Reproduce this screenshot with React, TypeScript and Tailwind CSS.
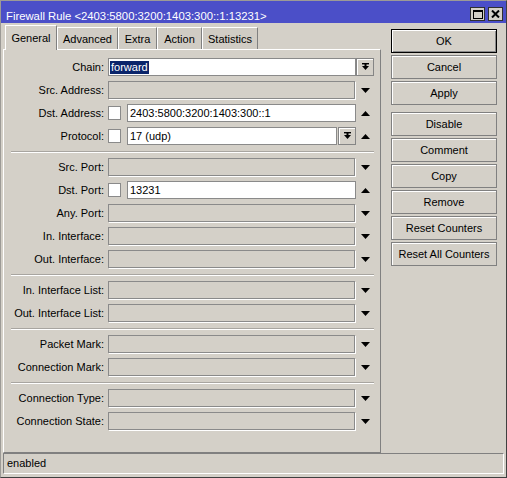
import React from "react";

type Kind = "disabled" | "text" | "check" | "checkDrop";
type Arrow = "down" | "up" | "drop";

type Row = {
  label: string;
  kind: Kind;
  value?: string;
  arrow: Arrow;
  selected?: boolean;
};

const GROUPS: Row[][] = [
  [
    { label: "Chain:", kind: "text", value: "forward", arrow: "drop", selected: true },
    { label: "Src. Address:", kind: "disabled", arrow: "down" },
    { label: "Dst. Address:", kind: "check", value: "2403:5800:3200:1403:300::1", arrow: "up" },
    { label: "Protocol:", kind: "checkDrop", value: "17 (udp)", arrow: "up" },
  ],
  [
    { label: "Src. Port:", kind: "disabled", arrow: "down" },
    { label: "Dst. Port:", kind: "check", value: "13231", arrow: "up" },
    { label: "Any. Port:", kind: "disabled", arrow: "down" },
    { label: "In. Interface:", kind: "disabled", arrow: "down" },
    { label: "Out. Interface:", kind: "disabled", arrow: "down" },
  ],
  [
    { label: "In. Interface List:", kind: "disabled", arrow: "down" },
    { label: "Out. Interface List:", kind: "disabled", arrow: "down" },
  ],
  [
    { label: "Packet Mark:", kind: "disabled", arrow: "down" },
    { label: "Connection Mark:", kind: "disabled", arrow: "down" },
  ],
  [
    { label: "Connection Type:", kind: "disabled", arrow: "down" },
    { label: "Connection State:", kind: "disabled", arrow: "down" },
  ],
];

const TABS = [
  { name: "General", w: "w-[52px]" },
  { name: "Advanced", w: "w-[61px]" },
  { name: "Extra", w: "w-[39px]" },
  { name: "Action", w: "w-[45px]" },
  { name: "Statistics", w: "w-[56px]" },
];

const Tri = ({ dir }: { dir: "up" | "down" }) => (
  <svg width="9" height="5" viewBox="0 0 9 5">
    <polygon points={dir === "down" ? "0,0 9,0 4.5,5" : "0,5 9,5 4.5,0"} fill="#000" />
  </svg>
);

const DropButton = () => (
  <div className="w-[18px] h-[18px] shrink-0 flex items-center justify-center border border-[#858585] shadow-[inset_1px_1px_0_#ffffff] bg-[#d4d0c8]">
    <svg width="7" height="8" viewBox="0 0 7 8">
      <rect x="0" y="0" width="7" height="1.4" fill="#000" />
      <rect x="2.5" y="1" width="2" height="3" fill="#000" />
      <polygon points="0,3 7,3 3.5,7" fill="#000" />
    </svg>
  </div>
);

const Checkbox = () => (
  <div className="w-[13px] h-[14px] shrink-0 bg-white border border-[#8a8a8a]" />
);

const TextBox = ({ value, selected }: { value?: string; selected?: boolean }) => (
  <div className="flex-1 h-[18px] bg-white border border-[#8a8a8a] flex items-center pl-[1px] overflow-hidden whitespace-nowrap">
    {selected ? (
      <span className="bg-[#0a246a] text-white px-[1px] leading-[13px]">{value}</span>
    ) : (
      <span className="pl-[1px]">{value}</span>
    )}
  </div>
);

const FieldRow = ({ row }: { row: Row }) => (
  <div className="flex items-center h-[18px]">
    <div className="w-[100px] text-right whitespace-nowrap">{row.label}</div>
    <div className="ml-[4px] w-[248px] flex items-center">
      {row.kind === "disabled" && (
        <div className="w-[247px] h-[18px] border border-[#8a8a8a] shadow-[1px_1px_0_#ffffff]" />
      )}
      {row.kind === "text" && <TextBox value={row.value} selected={row.selected} />}
      {row.kind === "check" && (
        <>
          <Checkbox />
          <div className="ml-[6px] flex-1 flex">
            <TextBox value={row.value} />
          </div>
        </>
      )}
      {row.kind === "checkDrop" && (
        <>
          <Checkbox />
          <div className="ml-[6px] flex-1 flex items-center">
            <TextBox value={row.value} />
            <div className="ml-[1px]">
              <DropButton />
            </div>
          </div>
        </>
      )}
    </div>
    <div className="w-[18px] flex items-center justify-center">
      {row.arrow === "drop" ? <DropButton /> : <Tri dir={row.arrow} />}
    </div>
  </div>
);

const Separator = () => (
  <div className="ml-[7px] w-[363px] mt-[6px] mb-[5px] h-[2px] border-t border-[#a8a5a0] border-b border-b-white" />
);

const Button = ({ label, primary }: { label: string; primary?: boolean }) =>
  primary ? (
    <div className="h-[24px] border border-black shadow-[inset_1px_1px_0_#ffffff,inset_-1px_-1px_0_#8a8a8a] flex items-center justify-center">
      {label}
    </div>
  ) : (
    <div className="h-[24px] border border-[#808080] shadow-[inset_1px_1px_0_#ffffff] flex items-center justify-center">
      {label}
    </div>
  );

const TitleBar = () => (
  <div className="h-[22px] bg-[#4b4fc8] flex items-start justify-between shrink-0">
    <div className="text-white text-[11.3px] pl-[5px] pt-[7px] whitespace-nowrap">
      Firewall Rule &lt;2403:5800:3200:1403:300::1:13231&gt;
    </div>
    <div className="flex gap-[3px] pt-[6px] pr-[3px]">
      <div className="w-[15px] h-[14px] bg-[#d4d0c8] border border-[#303030] flex items-center justify-center">
        <svg width="10" height="9" viewBox="0 0 10 9">
          <rect x="0.5" y="0.5" width="9" height="8" fill="none" stroke="#000" />
          <rect x="0" y="0" width="10" height="2" fill="#000" />
        </svg>
      </div>
      <div className="w-[15px] h-[14px] bg-[#d4d0c8] border border-[#303030] flex items-center justify-center">
        <svg width="9" height="8" viewBox="0 0 9 8">
          <path d="M1 0.5 L8 7.5 M8 0.5 L1 7.5" stroke="#000" strokeWidth="2" />
        </svg>
      </div>
    </div>
  </div>
);

export default function App() {
  return (
    <div className="w-[507px] h-[478px] bg-[#d4d0c8] border border-[#9c9a96] border-r-[#404040] border-b-[#404040] flex flex-col font-['Liberation_Sans',Arial,sans-serif] text-[11px] text-black overflow-hidden">
      <TitleBar />

      <div className="flex h-[430px] pt-[2px]">
        {/* left: tabs + form panel */}
        <div className="ml-[2px] w-[378px] flex flex-col">
          <div className="h-[24px] flex items-end pl-[2px]">
            {TABS.map((t, i) =>
              i === 0 ? (
                <div
                  key={t.name}
                  className={`${t.w} h-[25px] -mb-[1px] relative z-10 bg-[#d4d0c8] border-t border-l border-white border-r border-r-[#808080] flex items-center justify-center`}
                >
                  {t.name}
                </div>
              ) : (
                <div
                  key={t.name}
                  className={`${t.w} h-[22px] bg-[#d0ccc4] border-t border-l border-white border-r border-r-[#808080] flex items-center justify-center pt-[2px]`}
                >
                  {t.name}
                </div>
              )
            )}
          </div>
          <div className="flex-1 border border-white border-r-[#808080] border-b-[#808080] pt-[8px]">
            {GROUPS.map((g, gi) => (
              <div key={gi}>
                {gi > 0 && <Separator />}
                <div className="flex flex-col gap-[5px]">
                  {g.map((r) => (
                    <FieldRow key={r.label} row={r} />
                  ))}
                </div>
              </div>
            ))}
          </div>
        </div>

        {/* right: action buttons */}
        <div className="ml-[10px] w-[106px] pt-[4px] flex flex-col">
          <div className="flex flex-col gap-[2px]">
            <Button label="OK" primary />
            <Button label="Cancel" />
            <Button label="Apply" />
          </div>
          <div className="mt-[7px] flex flex-col gap-[2px]">
            <Button label="Disable" />
            <Button label="Comment" />
            <Button label="Copy" />
            <Button label="Remove" />
            <Button label="Reset Counters" />
            <Button label="Reset All Counters" />
          </div>
        </div>
      </div>

      <div className="mx-[2px] h-[21px] border border-[#808080] border-r-white border-b-white flex items-center pl-[3px]">
        enabled
      </div>
    </div>
  );
}
